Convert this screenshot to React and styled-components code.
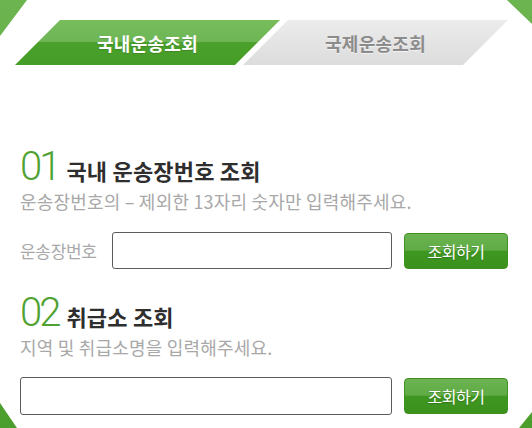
import React from 'react'
import styled, { createGlobalStyle } from 'styled-components'

const GlobalStyle = createGlobalStyle`
html, body {
  margin: 0;
  padding: 0;
  background: #fff;
}
* {
  box-sizing: border-box;
}
`;

const Frame = styled.div`
width: 532px;
height: 428px;
overflow: hidden;
background: linear-gradient(180deg, #6cb44f 0%, #58a83a 60%, #4b9d2c 100%);
font-family: "Noto Sans CJK KR", "Noto Sans", sans-serif;
`;

const Panel = styled.div`
height: 100%;
background: #fff;
clip-path: polygon(27px 0, 507px 0, 532px 24px, 532px 412px, 519px 428px, 17px 428px, 0 403px, 0 36px);
padding: 20px 24px 0 20px;
`;

const Tabs = styled.nav`
display: flex;
height: 45px;
margin-left: -5px;
`;

const Tab = styled.a`
display: flex;
align-items: center;
justify-content: center;
width: 267px;
height: 45px;
margin-left: ${p => (p.$first ? '0' : '-37px')};
clip-path: polygon(45px 0, 100% 0, calc(100% - 45px) 100%, 0 100%);
font-size: 18px;
font-weight: 700;
letter-spacing: 0.3px;
text-decoration: none;
color: ${p => (p.$active ? '#fff' : '#8c8c8c')};
background: ${p => (p.$active
  ? 'linear-gradient(180deg, #78bd5e 0%, #6db555 49%, #4aa02b 50%, #459d27 100%)'
  : 'linear-gradient(180deg, #ececec 0%, #e4e4e4 50%, #dcdcdc 100%)')};
text-shadow: ${p => (p.$active ? '0 1px 1px rgba(0,0,0,0.15)' : '0 1px 0 rgba(255,255,255,0.6)')};
`;

const Section = styled.section`
margin-top: ${p => p.$top}px;
`;

const TitleRow = styled.h2`
display: flex;
align-items: baseline;
gap: 8px;
margin: 0;
height: 40px;
line-height: 40px;
`;

const Num = styled.span`
font-family: Roboto, "Liberation Sans", sans-serif;
font-weight: 300;
font-size: 40px;
line-height: 34px;
letter-spacing: -3px;
color: #4fa232;
`;

const Title = styled.span`
font-size: 22px;
font-weight: 700;
letter-spacing: 0.2px;
color: #2e2e2e;
`;

const Desc = styled.p`
margin: ${p => p.$gap}px 0 0;
font-size: 18px;
line-height: 22px;
letter-spacing: 0.2px;
color: #a8a8a8;
`;

const FormRow = styled.div`
display: flex;
align-items: center;
gap: 12px;
margin-top: ${p => p.$gap}px;
`;

const Label = styled.label`
width: 80px;
font-size: 17px;
letter-spacing: -0.3px;
color: #a8a8a8;
`;

const Input = styled.input`
flex: 1;
height: ${p => p.$h}px;
border: 1px solid #5c5c5c;
border-radius: 3px;
background: #fff;
`;

const Button = styled.button`
width: 104px;
height: 36px;
border: 1px solid #3f8f22;
border-radius: 4px;
background: linear-gradient(180deg, #6cb452 0%, #5fab45 48%, #3f9621 50%, #3a921c 100%);
color: #fff;
font-family: "Noto Sans CJK KR", sans-serif;
font-size: 16px;
letter-spacing: -0.5px;
text-shadow: 0 1px 1px rgba(0,0,0,0.2);
cursor: pointer;
`;

export default function App() {
  return (
    <Frame>
      <GlobalStyle />
      <Panel>
        <Tabs>
          <Tab href="#" $first $active>국내운송조회</Tab>
          <Tab href="#">국제운송조회</Tab>
        </Tabs>

        <Section $top={85}>
          <TitleRow>
            <Num>01</Num>
            <Title>국내 운송장번호 조회</Title>
          </TitleRow>
          <Desc $gap={0}>운송장번호의 – 제외한 13자리 숫자만 입력해주세요.</Desc>
          <FormRow $gap={20}>
            <Label>운송장번호</Label>
            <Input type="text" $h={37} />
            <Button type="button">조회하기</Button>
          </FormRow>
        </Section>

        <Section $top={27}>
          <TitleRow>
            <Num>02</Num>
            <Title>취급소 조회</Title>
          </TitleRow>
          <Desc $gap={0}>지역 및 취급소명을 입력해주세요.</Desc>
          <FormRow $gap={19}>
            <Input type="text" $h={38} />
            <Button type="button">조회하기</Button>
          </FormRow>
        </Section>
      </Panel>
    </Frame>
  )
}
